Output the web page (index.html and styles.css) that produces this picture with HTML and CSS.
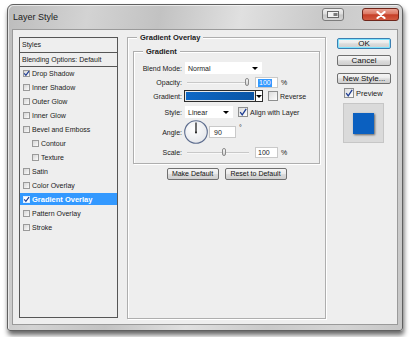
FILE: index.html
```html
<!DOCTYPE html>
<html>
<head>
<meta charset="utf-8">
<link rel="stylesheet" href="styles.css">
</head>
<body>
<div class="window">
  <div class="titlebar">
    <span class="title">Layer Style</span>
    <span class="cap-btn restore"><svg width="12" height="7" viewBox="0 0 12 7"><rect x="0.5" y="0.5" width="11" height="6" fill="#f2f2f2" stroke="#6a6a6a"/><rect x="6.5" y="2" width="4" height="3" fill="#7a7a7a"/></svg></span>
    <span class="cap-btn close"><svg width="10" height="8" viewBox="0 0 10 8"><path d="M1.5 1 L8.5 7 M8.5 1 L1.5 7" stroke="#fff" stroke-width="2.2" stroke-linecap="round"/></svg></span>
  </div>
  <div class="client">
    <div class="list">
      <div class="list-head">Styles</div>
      <div class="list-head second">Blending Options: Default</div>
      <div class="item"><span class="cb"><svg width="7" height="7" viewBox="0 0 7 7"><path d="M1.2 3.4 L2.9 5.4 L6 1.2" fill="none" stroke="#1d3c92" stroke-width="1.2"/></svg></span>Drop Shadow</div>
      <div class="item"><span class="cb"></span>Inner Shadow</div>
      <div class="item"><span class="cb"></span>Outer Glow</div>
      <div class="item"><span class="cb"></span>Inner Glow</div>
      <div class="item"><span class="cb"></span>Bevel and Emboss</div>
      <div class="item sub"><span class="cb"></span>Contour</div>
      <div class="item sub"><span class="cb"></span>Texture</div>
      <div class="item"><span class="cb"></span>Satin</div>
      <div class="item"><span class="cb"></span>Color Overlay</div>
      <div class="item selected"><span class="cb white"><svg width="7" height="7" viewBox="0 0 7 7"><path d="M1.2 3.4 L2.9 5.4 L6 1.2" fill="none" stroke="#1d3c92" stroke-width="1.2"/></svg></span>Gradient Overlay</div>
      <div class="item"><span class="cb"></span>Pattern Overlay</div>
      <div class="item"><span class="cb"></span>Stroke</div>
    </div>

    <div class="group outer">
      <div class="legend">Gradient Overlay</div>
      <div class="group inner">
        <div class="legend">Gradient</div>
        <div class="row r1">
          <span class="lbl">Blend Mode:</span>
          <div class="select w-blend"><span>Normal</span><span class="arrow"></span></div>
        </div>
        <div class="row r2">
          <span class="lbl">Opacity:</span>
          <div class="slider"><span class="thumb" style="left:60px"></span></div>
          <div class="field num sel"><span class="hl">100</span></div>
          <span class="unit">%</span>
        </div>
        <div class="row r3">
          <span class="lbl">Gradient:</span>
          <div class="grad"><div class="grad-fill"></div><div class="grad-arrow"><span class="arrow"></span></div></div>
          <span class="bigcb cb-rev"></span>
          <span class="cbtext">Reverse</span>
        </div>
        <div class="row r4">
          <span class="lbl">Style:</span>
          <div class="select w-style"><span>Linear</span><span class="arrow"></span></div>
          <span class="bigcb cb-align"><svg width="8" height="8" viewBox="0 0 8 8"><path d="M1.2 4.2 L3.2 6.8 L7.2 0.8" fill="none" stroke="#1d3c92" stroke-width="1.3"/></svg></span>
          <span class="cbtext">Align with Layer</span>
        </div>
        <div class="row r5">
          <span class="lbl">Angle:</span>
          <svg class="dial" width="24" height="24" viewBox="0 0 24 24">
            <defs><radialGradient id="dg" cx="0.4" cy="0.35" r="0.7"><stop offset="0" stop-color="#ffffff"/><stop offset="1" stop-color="#e4e6ea"/></radialGradient></defs>
            <circle cx="12" cy="12" r="11.3" fill="url(#dg)" stroke="#5d6d8e" stroke-width="1.1"/>
            <line x1="12" y1="12.5" x2="12" y2="2.5" stroke="#111" stroke-width="1.2"/>
            <circle cx="12" cy="12.5" r="0.9" fill="#111"/>
          </svg>
          <div class="field angle">90</div>
          <span class="deg">°</span>
        </div>
        <div class="row r6">
          <span class="lbl">Scale:</span>
          <div class="slider"><span class="thumb" style="left:37px"></span></div>
          <div class="field num">100</div>
          <span class="unit">%</span>
        </div>
      </div>
      <div class="btn-row">
        <div class="btn small b-make">Make Default</div>
        <div class="btn small b-reset">Reset to Default</div>
      </div>
    </div>

    <div class="side">
      <div class="btn side-btn ok">OK</div>
      <div class="btn side-btn cancel">Cancel</div>
      <div class="btn side-btn newstyle">New Style...</div>
      <div class="preview-row">
        <span class="bigcb"><svg width="8" height="8" viewBox="0 0 8 8"><path d="M1.2 4.2 L3.2 6.8 L7.2 0.8" fill="none" stroke="#1d3c92" stroke-width="1.3"/></svg></span>
        <span class="cbtext pv">Preview</span>
      </div>
      <div class="preview"><div class="pv-square"></div></div>
    </div>
  </div>
</div>
</body>
</html>
```

FILE: styles.css
```css
html, body {
  margin: 0;
  padding: 0;
}
body {
  width: 411px;
  height: 337px;
  overflow: hidden;
  background: #ffffff;
  font-family: "Liberation Sans", Arial, sans-serif;
  color: #1a1a1a;
}
.window {
  margin: 4px 0 0 7px;
  width: 396px;
  height: 327px;
  box-sizing: border-box;
  border: 1px solid #606060;
  border-radius: 6px 6px 3px 3px;
  background: linear-gradient(100deg, #bcbcbc 0%, #d3d3d3 18%, #c2c2c2 34%, #e0e0e0 52%, #c9c9c9 70%, #d4d4d4 86%, #c6c6c6 100%);
  box-shadow: 1px 4px 5px rgba(0, 0, 0, 0.6), inset 1px 1px 0 rgba(255,255,255,0.6);
  display: flex;
  flex-direction: column;
}
.titlebar {
  height: 24px;
  display: flex;
  align-items: flex-start;
  padding-left: 5px;
  flex: none;
}
.title {
  margin-top: 7px;
  font-size: 9px;
  line-height: 11px;
  color: #1b1b1b;
  white-space: nowrap;
}
.cap-btn {
  margin-top: 3px;
  height: 13px;
  box-sizing: border-box;
  border-radius: 3px;
  display: flex;
  align-items: center;
  justify-content: center;
}
.restore {
  margin-left: auto;
  width: 22px;
  border: 1px solid #7c7c7c;
  background: linear-gradient(#f0f0f0 0%, #dcdcdc 48%, #c4c4c4 52%, #d6d6d6 100%);
}
.close {
  margin-left: 18px;
  margin-right: 3px;
  width: 37px;
  border: 1px solid #6e261b;
  background: linear-gradient(#eba394 0%, #dc7762 45%, #c63f28 52%, #d25a40 100%);
}
.client {
  flex: 1;
  margin: 0 4px 5px 4px;
  background: #eeeeee;
  border: 1px solid #9a9a9a;
  display: flex;
  align-items: flex-start;
  padding: 7px 0 0 6px;
}

/* left list */
.list {
  width: 99px;
  height: 281px;
  box-sizing: border-box;
  border: 1px solid #565656;
  background: #eeeeee;
  font-size: 7px;
  flex: none;
}
.list-head {
  height: 14px;
  line-height: 14px;
  padding-left: 2px;
  border-bottom: 1px solid #565656;
  white-space: nowrap;
}
.list-head.second {
  height: 13px;
  line-height: 13px;
}
.item {
  height: 12px;
  margin-bottom: 2px;
  display: flex;
  align-items: center;
  padding-left: 3px;
  white-space: nowrap;
}
.item.sub {
  padding-left: 12px;
}
.item.selected {
  background: #3399ff;
  color: #ffffff;
  font-weight: bold;
  font-size: 7.5px;
}
.cb {
  width: 7px;
  height: 7px;
  box-sizing: border-box;
  border: 1px solid #9a9a9a;
  background: linear-gradient(135deg, #d6d6d6, #fbfbfb);
  margin-right: 2px;
  display: flex;
  align-items: center;
  justify-content: center;
  flex: none;
}
.cb svg {
  margin: -1px;
}
.cb.white {
  background: #ffffff;
  border-color: #dfefff;
}

/* group boxes */
.group {
  border: 1px solid #aeaeae;
  box-shadow: inset 1px 1px 0 #ffffff, 1px 1px 0 #ffffff;
  box-sizing: border-box;
}
.outer {
  margin-left: 9px;
  width: 199px;
  height: 282px;
  flex: none;
}
.legend {
  margin-top: -5px;
  margin-left: 9px;
  padding: 0 3px;
  width: max-content;
  background: #eeeeee;
  font-size: 7.5px;
  font-weight: bold;
  line-height: 9px;
  color: #1a1a1a;
}
.inner {
  margin: 9px 5px 0 5px;
  padding-bottom: 5px;
}
.row {
  display: flex;
  align-items: center;
  font-size: 7px;
  white-space: nowrap;
}
.lbl {
  width: 48px;
  text-align: right;
  margin-right: 3px;
  flex: none;
}
.r1 { margin-top: 6px; height: 12px; }
.r2 { margin-top: 3px; height: 11px; }
.r3 { margin-top: 2px; height: 12px; }
.r4 { margin-top: 4px; height: 12px; }
.r5 { margin-top: 2px; height: 24px; }
.r6 { margin-top: 3px; height: 11px; }

.select {
  height: 12px;
  background: #ffffff;
  display: flex;
  align-items: center;
  padding-left: 3px;
  box-sizing: border-box;
}
.w-blend { width: 77px; }
.w-style { width: 48px; }
.arrow {
  margin-left: auto;
  margin-right: 4px;
  width: 0;
  height: 0;
  border-left: 3px solid transparent;
  border-right: 3px solid transparent;
  border-top: 3px solid #000000;
}
.slider {
  position: relative;
  margin-left: 2px;
  width: 62px;
  height: 11px;
  display: flex;
  align-items: center;
}
.slider::before {
  content: "";
  display: block;
  width: 100%;
  height: 1px;
  background: #c8c8c8;
  box-shadow: 0 1px 0 #f8f8f8;
}
.thumb {
  position: absolute;
  top: 1px;
  width: 4px;
  height: 8px;
  margin-left: -2px;
  box-sizing: border-box;
  border: 1px solid #8a8a8a;
  border-radius: 2px;
  background: linear-gradient(#fafafa, #d0d0d0);
}
.field {
  height: 11px;
  box-sizing: border-box;
  background: #ffffff;
  border: 1px solid #c9c9c9;
  display: flex;
  align-items: center;
  font-size: 7px;
}
.num {
  margin-left: 6px;
  width: 23px;
  padding-left: 2px;
}
.hl {
  background: #3399ff;
  color: #ffffff;
  padding: 0 1px;
  line-height: 8px;
}
.unit {
  margin-left: 3px;
}
.grad {
  margin-left: -1px;
  width: 79px;
  height: 12px;
  box-sizing: border-box;
  border: 1px solid #2c2c2c;
  display: flex;
}
.grad-fill {
  flex: 1;
  border: 1px solid #e8e8e8;
  background: linear-gradient(to right, #0e68c6, #0b5cb2 60%, #0a55a6);
}
.grad-arrow {
  width: 6px;
  border-left: 1px solid #2c2c2c;
  background: #ffffff;
  display: flex;
  align-items: center;
}
.grad-arrow .arrow {
  margin-right: 0;
  margin-left: 0;
  border-left-width: 3px;
  border-right-width: 3px;
}
.bigcb {
  width: 10px;
  height: 10px;
  box-sizing: border-box;
  border: 1px solid #8e8f8f;
  background: linear-gradient(135deg, #dcdcdc, #fdfdfd);
  display: flex;
  align-items: center;
  justify-content: center;
  flex: none;
}
.cb-rev { margin-left: 5px; }
.cb-align { margin-left: 5px; }
.cbtext {
  margin-left: 2px;
  font-size: 7px;
}
.dial {
  margin-left: -1px;
  flex: none;
}
.angle {
  margin-left: 1px;
  width: 27px;
  height: 12px;
  padding-left: 4px;
}
.deg {
  margin-left: 3px;
  align-self: flex-start;
  margin-top: 4px;
  font-size: 7px;
}
.btn-row {
  margin-top: 4px;
  display: flex;
  justify-content: center;
  gap: 6px;
}
.btn {
  box-sizing: border-box;
  border: 1px solid #707070;
  border-radius: 2px;
  background: linear-gradient(#f5f5f5 0%, #ebebeb 45%, #dcdcdc 52%, #cfcfcf 100%);
  color: #111111;
  text-align: center;
  white-space: nowrap;
}
.small {
  height: 12px;
  line-height: 10px;
  font-size: 7px;
}
.b-make { width: 52px; }
.b-reset { width: 62px; }

/* right column */
.side {
  margin-left: 11px;
  width: 54px;
  flex: none;
  display: flex;
  flex-direction: column;
}
.side-btn {
  height: 11px;
  line-height: 9px;
  font-size: 8px;
}
.ok {
  margin-top: 1px;
  border-color: #3c7fb1;
  box-shadow: inset 0 0 0 1px #7fe4ff;
}
.cancel { margin-top: 6px; }
.newstyle { margin-top: 7px; }
.preview-row {
  margin-top: 4px;
  margin-left: 7px;
  height: 10px;
  display: flex;
  align-items: center;
}
.pv {
  font-size: 7.5px;
}
.preview {
  margin: 5px 0 0 6px;
  width: 41px;
  height: 40px;
  box-sizing: border-box;
  border: 1px solid #c6c6c6;
  background: #dadada;
  padding: 9px;
}
.pv-square {
  width: 21px;
  height: 21px;
  background: #0b60c0;
  box-shadow: 1px 1px 2px rgba(0, 0, 0, 0.55);
}
```
